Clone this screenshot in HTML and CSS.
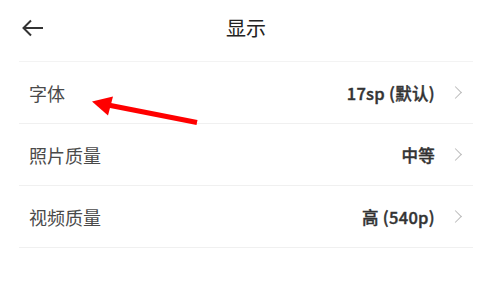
FILE: index.html
```html
<!DOCTYPE html>
<html lang="zh-CN">
  <head>
    <meta charset="UTF-8" />
    <meta name="viewport" content="width=device-width, initial-scale=1.0" />
    <title>显示</title>
    <link rel="stylesheet" href="styles.css">
  </head>

  <body>
    <div class="page">
      <div class="header">
        <span class="back">
          <svg width="22" height="18" viewBox="0 0 22 18">
            <path d="M21 9H2M9 1.5L1.5 9L9 16.5" fill="none" stroke="#333" stroke-width="2" />
          </svg>
        </span>
        <h1 class="title">显示</h1>
      </div>

      <ul class="list">
        <li class="item">
          <span class="label">字体</span>
          <span class="value">17sp (默认)</span>
          <i class="chevron"></i>
        </li>
        <li class="item">
          <span class="label">照片质量</span>
          <span class="value">中等</span>
          <i class="chevron"></i>
        </li>
        <li class="item">
          <span class="label">视频质量</span>
          <span class="value">高 (540p)</span>
          <i class="chevron"></i>
        </li>
      </ul>

      <!-- 标注箭头 -->
      <svg class="mark" width="491" height="301" viewBox="0 0 491 301">
        <line x1="197" y1="122.5" x2="108" y2="105" stroke="#f00" stroke-width="5" />
        <polygon points="92,101.5 113,96.5 108,115.5" fill="#f00" />
      </svg>
    </div>
  </body>
</html>
```

FILE: styles.css
```css
* {
  padding: 0;
  margin: 0;
  box-sizing: border-box;
}

html,
body {
  width: 100%;
  height: 100%;
  background-color: #fff;
  font-family: "Noto Sans CJK SC", "Noto Sans", sans-serif;
  color: #333;
}

.page {
  position: relative;
  height: 100%;
  padding: 0 18px 0 19px;
}

.header {
  height: 62px;
  display: flex;
  align-items: center;
  justify-content: center;
  position: relative;
  border-bottom: 1px solid #f3f3f3;
}

.back {
  position: absolute;
  left: 3px;
  top: 19px;
  display: flex;
}

.title {
  font-size: 20px;
  font-weight: normal;
  color: #222;
  margin-top: -6px;
}

.list {
  list-style: none;
}

.item {
  height: 62px;
  display: flex;
  align-items: center;
  padding: 0 13px 0 10px;
  border-bottom: 1px solid #f0f0f0;
}

.label {
  flex: 1;
  font-size: 18px;
  color: #4a4a4a;
}

.value {
  font-size: 16.5px;
  font-weight: 500;
  color: #333;
  letter-spacing: 0.3px;
  -webkit-text-stroke: 0.4px #333;
}

.chevron {
  width: 9px;
  height: 9px;
  margin-left: 16px;
  border-top: 1.2px solid #bbb;
  border-right: 1.2px solid #bbb;
  transform: rotate(45deg);
}

.mark {
  position: absolute;
  left: 0;
  top: 0;
  pointer-events: none;
}
```
